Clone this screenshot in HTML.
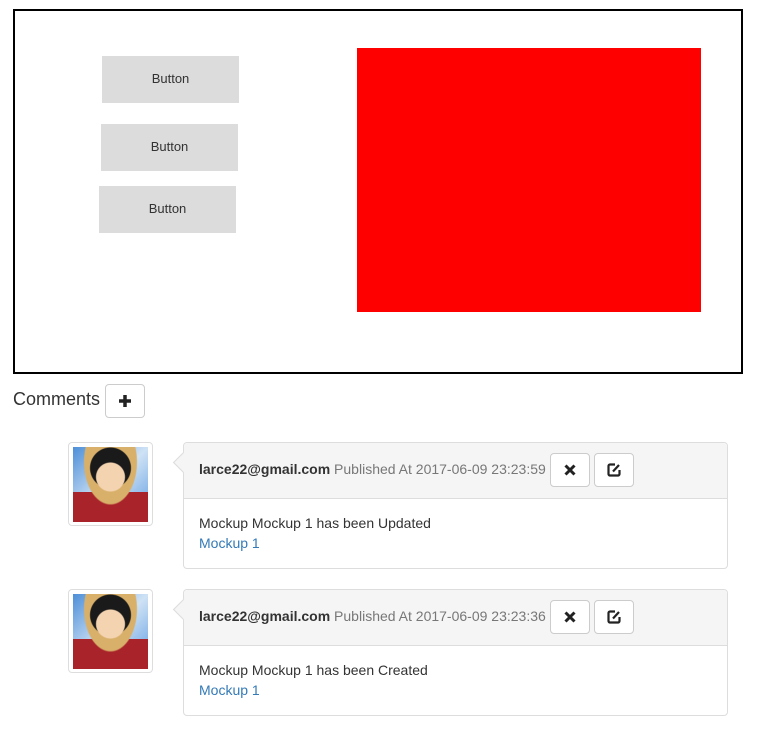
<!DOCTYPE html>
<html><head><style>
body{margin:0;width:759px;height:735px;background:#fff;font-family:"Liberation Sans",sans-serif;position:relative;overflow:hidden;color:#333}
.a{position:absolute}
.gb{background:#dcdcdc;font-size:13px;color:#333;display:flex;align-items:center;justify-content:center;width:137px;height:47px;padding-bottom:2px;box-sizing:border-box}
.btn{position:absolute;width:38px;height:32px;border:1px solid #ccc;border-radius:4px;background:#fff;display:flex;align-items:center;justify-content:center}
.av{position:absolute;left:68px;width:83px;height:82px;border:1px solid #ddd;border-radius:4px;background:#fff}
.av div{position:absolute;left:4px;top:4px;width:75px;height:75px;background:radial-gradient(circle at 50% 40%,#f3d3b0 0 14px,transparent 15px),radial-gradient(circle at 50% 28%,#1a1a1a 0 20px,transparent 21px),radial-gradient(ellipse at 50% 20%,#d9b06a 0 26px,transparent 27px),linear-gradient(to bottom,transparent 60%,#a8242a 60%),linear-gradient(135deg,#4d8fd8,#cfe2f5 50%,#5a9ae0)}
.pn{position:absolute;left:183px;width:543px;height:125px;border:1px solid #ddd;border-radius:4px;background:#fff}
.ph{height:55px;background:#f5f5f5;border-bottom:1px solid #ddd;border-radius:4px 4px 0 0;position:relative}
.ph span.t{position:absolute;left:15px;top:18px;font-size:14px;color:#777}
.ph b{color:#333}
.arr{position:absolute;left:-8px;top:12px;width:14px;height:14px;background:#f5f5f5;border-left:1px solid #ddd;border-bottom:1px solid #ddd;transform:rotate(45deg)}
.bd{position:absolute;left:15px;top:70px;font-size:14px;line-height:20px}
.bd a{color:#337ab7;text-decoration:none}
</style></head><body>
<div class="a" style="left:13px;top:9px;width:726px;height:361px;border:2px solid #000"></div>
<div class="a gb" style="left:102px;top:56px">Button</div>
<div class="a gb" style="left:101px;top:124px">Button</div>
<div class="a gb" style="left:99px;top:186px">Button</div>
<div class="a" style="left:357px;top:48px;width:344px;height:264px;background:#f00"></div>
<div class="a" style="left:13px;top:389px;font-size:18px">Comments</div>
<div class="btn" style="left:105px;top:384px;height:32px;width:38px"><svg width="14" height="14"><path d="M7 1v12M1 7h12" stroke="#222" stroke-width="3.5"/></svg></div>

<div class="av" style="top:442px"><div></div></div>
<div class="pn" style="top:442px"><div class="ph"><div class="arr"></div><span class="t"><b>larce22@gmail.com</b> Published At 2017-06-09 23:23:59</span>
<div class="btn" style="left:366px;top:10px"><svg width="12" height="12"><path d="M1.5 1.5l9 9M10.5 1.5l-9 9" stroke="#222" stroke-width="3"/></svg></div>
<div class="btn" style="left:410px;top:10px"><svg width="16" height="16"><path d="M9 2.5H4A1.5 1.5 0 0 0 2.5 4v8A1.5 1.5 0 0 0 4 13.5h8A1.5 1.5 0 0 0 13.5 12V8" fill="none" stroke="#222" stroke-width="2.2"/><path d="M7 9.5l6-6.5" stroke="#222" stroke-width="2.2"/></svg></div>
</div><div class="bd">Mockup Mockup 1 has been Updated<br><a>Mockup 1</a></div></div>

<div class="av" style="top:589px"><div></div></div>
<div class="pn" style="top:589px"><div class="ph"><div class="arr"></div><span class="t"><b>larce22@gmail.com</b> Published At 2017-06-09 23:23:36</span>
<div class="btn" style="left:366px;top:10px"><svg width="12" height="12"><path d="M1.5 1.5l9 9M10.5 1.5l-9 9" stroke="#222" stroke-width="3"/></svg></div>
<div class="btn" style="left:410px;top:10px"><svg width="16" height="16"><path d="M9 2.5H4A1.5 1.5 0 0 0 2.5 4v8A1.5 1.5 0 0 0 4 13.5h8A1.5 1.5 0 0 0 13.5 12V8" fill="none" stroke="#222" stroke-width="2.2"/><path d="M7 9.5l6-6.5" stroke="#222" stroke-width="2.2"/></svg></div>
</div><div class="bd">Mockup Mockup 1 has been Created<br><a>Mockup 1</a></div></div>
</body></html>
